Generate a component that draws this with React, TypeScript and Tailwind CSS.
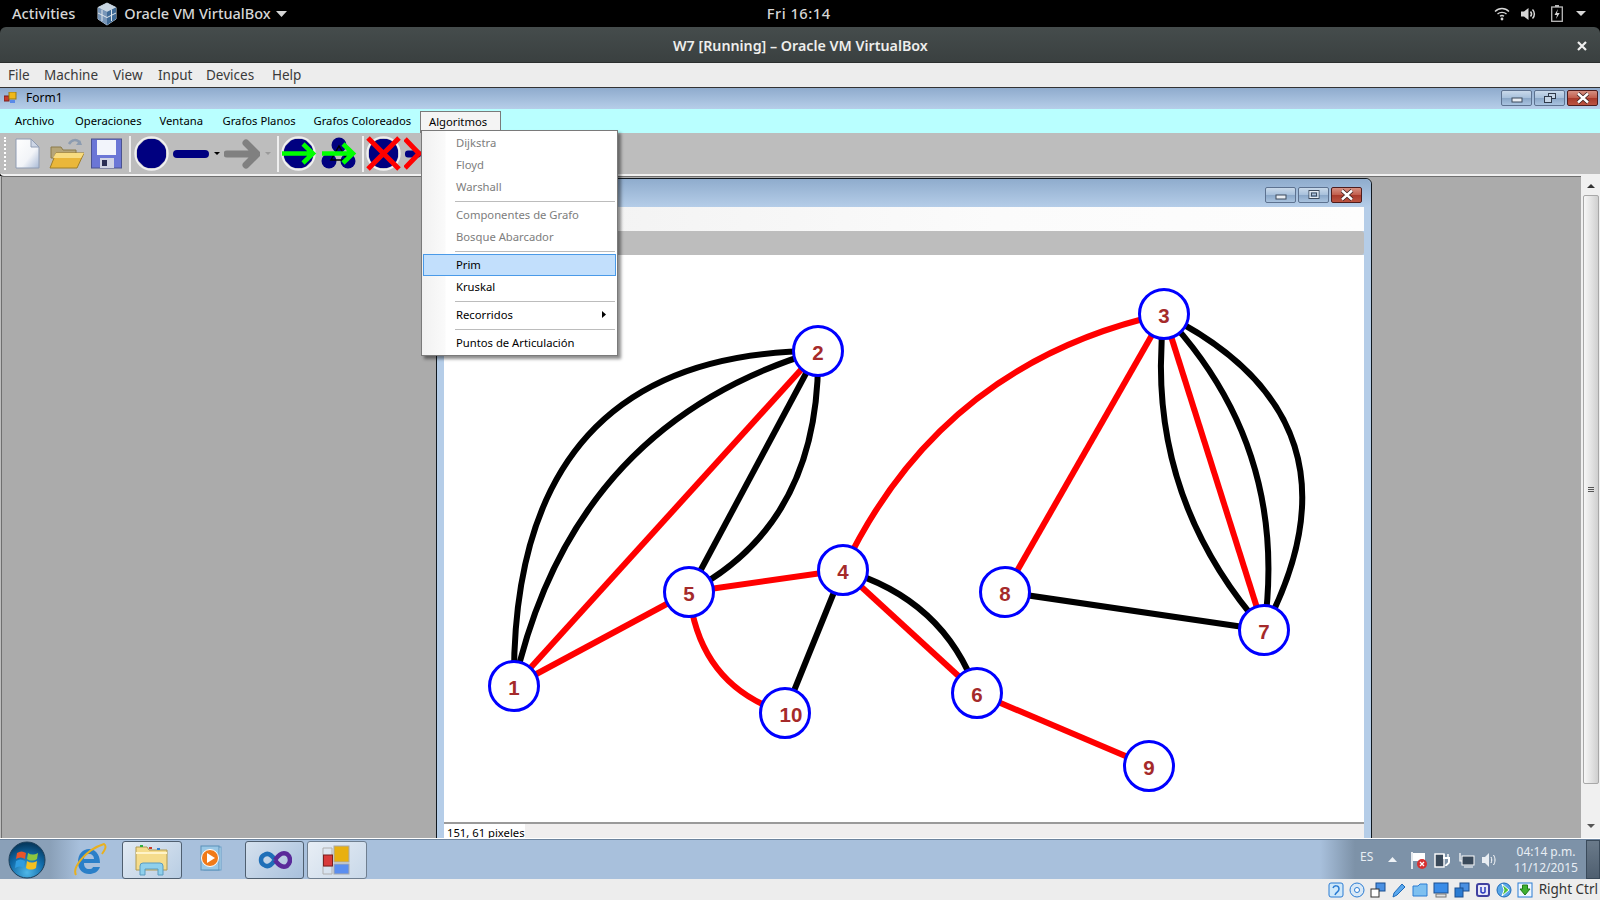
import React from "react";

const ui = { fontFamily: '"Noto Sans", sans-serif' };
const win = { fontFamily: '"Noto Sans", sans-serif', fontSize: "11.25px" };

const nodes: [string, number, number, number][] = [
  ["1", 514, 686, 0], ["2", 818, 351, 0], ["3", 1164, 314, 0], ["4", 843, 570, 0], ["5", 689, 592, 0],
  ["6", 977, 693, 0], ["7", 1264, 630, 0], ["8", 1005, 592, 0], ["9", 1149, 766, 0], ["10", 785, 713, 6],
];
const edges: [string, string][] = [
  ["M514 686Q510 352 818 351", "#000"],
  ["M514 686Q572 424 818 351", "#000"],
  ["M818 351L689 592", "#000"],
  ["M818 351Q821 523 689 592", "#000"],
  ["M843 570L785 713", "#000"],
  ["M843 570Q944 599 977 693", "#000"],
  ["M1005 592L1264 630", "#000"],
  ["M1164 314Q1143 493 1264 630", "#000"],
  ["M1164 314Q1290 447 1264 630", "#000"],
  ["M1164 314Q1375 420 1264 630", "#000"],
  ["M514 686L818 351", "#f00"],
  ["M514 686L689 592", "#f00"],
  ["M689 592L843 570", "#f00"],
  ["M689 592Q699 686 785 713", "#f00"],
  ["M843 570L977 693", "#f00"],
  ["M843 570Q941 363 1164 314", "#f00"],
  ["M1164 314L1005 592", "#f00"],
  ["M1164 314L1264 630", "#f00"],
  ["M977 693L1149 766", "#f00"],
];

function Graph() {
  return (
    <svg width="920" height="567" viewBox="444 255 920 567" className="block">
      {edges.map(([d, c], i) => (
        <path key={i} d={d} fill="none" stroke={c} strokeWidth="6" />
      ))}
      {nodes.map(([l, x, y, dx]) => (
        <g key={l}>
          <circle cx={x} cy={y} r="24.5" fill="#fff" stroke="#0000ff" strokeWidth="3" />
          <text x={x + dx} y={y + 9} textAnchor="middle" fontSize="20.5" fontWeight="700" fill="#a52a2a" fontFamily='"Liberation Sans", sans-serif'>{l}</text>
        </g>
      ))}
    </svg>
  );
}

function WinBtn({ kind }: { kind: "min" | "max" | "restore" | "close" }) {
  const cls = kind === "close"
    ? "border-[#4e1c1c] bg-[linear-gradient(#d69082_0%,#c25f4e_48%,#a93a2b_52%,#bb5442_100%)]"
    : "border-[#5d7290] bg-[linear-gradient(#c9d9ea_0%,#a8c1dc_48%,#8aa7c8_52%,#a9c3df_100%)]";
  return (
    <div className={"flex h-[16px] w-[31px] items-center justify-center rounded-[2px] border " + cls}>
      <svg width="16" height="12" viewBox="0 0 16 12">
        {kind === "min" && <rect x="3" y="6" width="10" height="4" fill="#e8edf3" stroke="#3d4a5c" />}
        {kind === "max" && <><rect x="3" y="1.5" width="10" height="8" fill="none" stroke="#3d4a5c" strokeWidth="1" /><rect x="4" y="2.5" width="8" height="6" fill="none" stroke="#e8edf3" /><rect x="5.5" y="4" width="5" height="3" fill="none" stroke="#3d4a5c" /></>}
        {kind === "restore" && <><rect x="6.5" y="1.5" width="7" height="5" fill="#c5d5e6" stroke="#2f3a4a" /><rect x="2.5" y="4.5" width="7" height="6" fill="#c5d5e6" stroke="#2f3a4a" /></>}
        {kind === "close" && <path d="M3 1.5L13 10.5M13 1.5L3 10.5" stroke="#3a2020" strokeWidth="4" />}
        {kind === "close" && <path d="M3 1.5L13 10.5M13 1.5L3 10.5" stroke="#fff" strokeWidth="2.4" />}
      </svg>
    </div>
  );
}

function VBoxLogo() {
  return (
    <svg width="22" height="24" viewBox="0 0 22 24">
      <path d="M11 1L20 5.5V17L11 23L2 17V5.5Z" fill="#5f7f9f" stroke="#c8d4de" strokeWidth="1" />
      <path d="M11 1L20 5.5L11 10L2 5.5Z" fill="#c9d6e2" />
      <path d="M2 5.5L11 10V23L2 17Z" fill="#7896b8" />
      <path d="M20 5.5L11 10V23L20 17Z" fill="#3f6a96" />
      <path d="M6 7.5V19M15.5 7.5V19M2 11L11 15.5L20 11" stroke="#dfe6ec" strokeWidth="1" fill="none" />
    </svg>
  );
}

function TopBar() {
  return (
    <div className="relative flex h-[27px] items-center bg-black text-[#d6d6d6]" style={ui}>
      <span className="ml-[12px] text-[14.7px] font-medium">Activities</span>
      <span className="ml-[21px]"><VBoxLogo /></span>
      <span className="ml-[6px] text-[14.5px] font-medium">Oracle VM VirtualBox</span>
      <svg className="ml-[5px]" width="11" height="6" viewBox="0 0 11 6"><path d="M0 0H11L5.5 6Z" fill="#d6d6d6" /></svg>
      <span className="ml-[480px] text-[14.7px] font-medium tracking-[0.5px]">Fri 16:14</span>
      <div className="ml-auto mr-[14px] flex items-center">
        <svg width="16" height="15" viewBox="0 0 16 15" fill="none" stroke="#d6d6d6" strokeWidth="1.4">
          <path d="M1 5.5C5 1.5 11 1.5 15 5.5" /><path d="M3.5 8C6 5.8 10 5.8 12.5 8" /><path d="M6 10.3C7 9.5 9 9.5 10 10.3" /><circle cx="8" cy="13" r="1.4" fill="#d6d6d6" stroke="none" />
        </svg>
        <svg className="ml-[11px]" width="16" height="14" viewBox="0 0 16 14" fill="none">
          <path d="M0 4.5H3L7.5 1V13L3 9.5H0Z" fill="#d6d6d6" /><path d="M9.5 4.5C10.8 6 10.8 8 9.5 9.5M11.5 2.5C14 5 14 9 11.5 11.5" stroke="#d6d6d6" strokeWidth="1.5" />
        </svg>
        <svg className="ml-[14px]" width="12" height="17" viewBox="0 0 12 17" fill="none">
          <rect x="0.7" y="2" width="10.6" height="14.3" stroke="#bbb" strokeWidth="1.3" /><rect x="4" y="0" width="4" height="2" fill="#bbb" /><path d="M7 4L3.5 10H6L5 14L8.7 8H6Z" fill="#d6d6d6" />
        </svg>
        <svg className="ml-[13px]" width="10" height="5" viewBox="0 0 10 5"><path d="M0 0H10L5 5Z" fill="#d6d6d6" /></svg>
      </div>
    </div>
  );
}

function TitleBar() {
  return (
    <div className="flex h-[36px] items-center rounded-t-[6px] border-b border-[#2a2e2e] bg-[linear-gradient(#454c4c,#3a4040)] pt-[2px] text-[#eeeeec]" style={ui}>
      <span className="ml-[673px] text-[14.25px] font-semibold">W7 [Running] – Oracle VM VirtualBox</span>
      <svg className="ml-auto mr-[13px]" width="10" height="10" viewBox="0 0 10 10"><path d="M1 1L9 9M9 1L1 9" stroke="#f0f0f0" strokeWidth="2.2" /></svg>
    </div>
  );
}

function VBoxMenu() {
  const items: [string, number][] = [["File", 36], ["Machine", 69], ["View", 45], ["Input", 48], ["Devices", 66], ["Help", 40]];
  return (
    <div className="flex h-[25px] items-center border-b border-[#333] bg-[#ededed] pl-[8px] pt-[1px] text-[13.5px] text-[#3a3a3a]" style={ui}>
      {items.map(([t, w]) => <span key={t} style={{ width: w }}>{t}</span>)}
    </div>
  );
}

function DocIcon() {
  return (
    <svg width="26" height="31" viewBox="0 0 26 31">
      <defs><linearGradient id="dc" x1="0" y1="0" x2="1" y2="1"><stop offset="0" stopColor="#fff" /><stop offset="0.6" stopColor="#f2f4f8" /><stop offset="1" stopColor="#a9bad6" /></linearGradient></defs>
      <path d="M2 1H17L25 9V30H2Z" fill="url(#dc)" stroke="#8f9cb3" />
      <path d="M17 1V9H25Z" fill="#cdd6e6" stroke="#8f9cb3" />
    </svg>
  );
}
function FolderIcon() {
  return (
    <svg width="35" height="31" viewBox="0 0 35 31">
      <path d="M20 6C23 1 28 1 31 5" fill="none" stroke="#8c9cb0" strokeWidth="2.5" />
      <path d="M31 2L33 7L27 7Z" fill="#8c9cb0" />
      <path d="M2 9H12L14 12H27V20H2Z" fill="#b5a578" stroke="#8b7a48" />
      <path d="M7 15H35L28 30H1Z" fill="#eab73a" stroke="#a07f28" />
      <path d="M7 15H35L32 20H4Z" fill="#f8dc80" />
    </svg>
  );
}
function SaveIcon() {
  return (
    <svg width="31" height="31" viewBox="0 0 31 31">
      <rect x="0.5" y="1" width="30" height="29" fill="#6b76d6" stroke="#4a528f" />
      <rect x="6" y="2" width="19" height="15" fill="#f2f4fb" />
      <rect x="9" y="20" width="14" height="10" fill="#d0d3e4" />
      <rect x="11" y="22" width="5" height="6" fill="#2a2d55" />
    </svg>
  );
}
function Octa() {
  return (
    <>
      <circle cx="17.5" cy="17.5" r="16.2" fill="none" stroke="#f0f0f0" strokeWidth="2" />
      <path d="M10 4.5L14 3H21L25 4.5L30.5 10L32 14V21L30.5 25L25 30.5L21 32H14L10 30.5L4.5 25L3 21V14L4.5 10Z" fill="#000080" />
    </>
  );
}
const GreenArrow = ({ x }: { x: number }) => (
  <path d={`M${x} 17.5H${x + 31}M${x + 21} 8L${x + 31} 17.5L${x + 21} 27`} fill="none" stroke="#00ff00" strokeWidth="4.5" />
);

function Toolbar() {
  return (
    <div className="relative flex h-[43px] items-center overflow-hidden rounded-bl-[4px] border-b-2 border-[#f0f0f0] bg-[#bdbdbd] pl-[14px]">
      <div className="absolute left-[4px] top-[4px] h-[33px] w-[2px] border-l-2 border-dotted border-white" />
      <DocIcon />
      <span className="ml-[9px]"><FolderIcon /></span>
      <span className="ml-[7px]"><SaveIcon /></span>
      <div className="ml-[7px] h-[36px] w-[2px] bg-[#efefef]" />
      <svg className="ml-[3px]" width="35" height="35" viewBox="0 0 35 35"><Octa /></svg>
      <svg className="ml-[4px]" width="36" height="8" viewBox="0 0 36 8"><rect x="0" y="0" width="36" height="8" rx="4" fill="#000080" /></svg>
      <svg className="ml-[5px]" width="6" height="3" viewBox="0 0 6 3"><path d="M0 0H6L3 3Z" fill="#000" /></svg>
      <svg className="ml-[4px]" width="36" height="30" viewBox="0 0 36 30"><path d="M3 15H32M22 4L33 15L22 26" fill="none" stroke="#808080" strokeWidth="7" strokeLinecap="round" /></svg>
      <svg className="ml-[5px]" width="6" height="3" viewBox="0 0 6 3"><path d="M0 0H6L3 3Z" fill="#9a9a9a" /></svg>
      <div className="ml-[6px] h-[36px] w-[2px] bg-[#efefef]" />
      <svg className="ml-[2px]" width="36" height="35" viewBox="0 0 36 35"><Octa /><GreenArrow x={1} /></svg>
      <svg className="ml-[4px]" width="36" height="35" viewBox="0 0 36 35">
        <circle cx="18" cy="9" r="7.5" fill="#000080" /><circle cx="8" cy="25" r="7.5" fill="#000080" /><circle cx="27" cy="25" r="7.5" fill="#000080" />
        <path d="M10 24H26L18 10Z" fill="none" stroke="#000" strokeWidth="1.5" />
        <GreenArrow x={1} />
      </svg>
      <div className="ml-[5px] h-[36px] w-[2px] bg-[#efefef]" />
      <svg className="ml-[2px]" width="36" height="35" viewBox="0 0 36 35">
        <Octa />
        <path d="M2 2L33 33M33 2L2 33" stroke="#ff0000" strokeWidth="5" />
      </svg>
      <svg className="ml-[2px]" width="20" height="35" viewBox="0 0 20 35">
        <rect x="1" y="14.5" width="16" height="7" rx="3" fill="#000080" />
        <path d="M1 3L15 17.5L1 32" fill="none" stroke="#ff0000" strokeWidth="5" />
      </svg>
    </div>
  );
}

function FormMenu() {
  const items: [string, number][] = [["Archivo", 60], ["Operaciones", 84.5], ["Ventana", 63], ["Grafos Planos", 91], ["Grafos Coloreados", 106.5]];
  return (
    <div className="flex h-[24px] items-end bg-[#b9ffff] pl-[15px] text-black" style={win}>
      {items.map(([t, w]) => <span key={t} className="pb-[3px]" style={{ width: w }}>{t}</span>)}
      <span className="flex h-[22px] w-[81px] items-center justify-start border border-b-0 border-[#7a7a7a] bg-[#f4f4f4] pb-[1px] pl-[8px]">Algoritmos</span>
    </div>
  );
}

function Dropdown() {
  const Row = ({ t, off, hi, arrow }: { t: string; off?: boolean; hi?: boolean; arrow?: boolean }) => (
    <div className={"relative flex h-[22px] items-center " + (off ? "text-[#7d7d7d] " : "text-black ") + (hi ? "border border-[#4a9ae8] bg-[#c2dffc] pl-[32px]" : "pl-[33px]")}>
      {t}
      {arrow && <svg className="absolute right-[10px] top-[7px]" width="4" height="7" viewBox="0 0 4 7"><path d="M0 0L4 3.5L0 7Z" fill="#000" /></svg>}
    </div>
  );
  const Sep = () => <div className="flex h-[6px] items-center pl-[32px] pr-[1px]"><div className="h-px w-full bg-[#bcbcbc]" /></div>;
  return (
    <div className="absolute left-[421px] top-[130px] z-10 h-[226px] w-[197px] border border-[#7a7a7a] bg-[linear-gradient(90deg,#f1f1f1_0,#fafafa_23px,#fff_24px)] p-[1px] pt-[1px] shadow-[3px_3px_3px_rgba(0,0,0,0.45)]" style={win}>
      <Row t="Dijkstra" off /><Row t="Floyd" off /><Row t="Warshall" off /><Sep />
      <Row t="Componentes de Grafo" off /><Row t="Bosque Abarcador" off /><Sep />
      <Row t="Prim" hi /><Row t="Kruskal" /><Sep />
      <Row t="Recorridos" arrow /><Sep />
      <Row t="Puntos de Articulación" />
    </div>
  );
}

function ChildWindow() {
  return (
    <div className="h-[680px] w-[936px] shrink-0 rounded-t-[6px] border border-[#10181f] bg-[#b5cde8] px-[7px]">
      <div className="-mx-[7px] flex h-[28px] items-start justify-end gap-[2px] rounded-t-[6px] bg-[linear-gradient(#8faccd,#b5cde8)] pl-[7px] pr-[9px] pt-[8px]">
        <WinBtn kind="min" /><WinBtn kind="max" /><WinBtn kind="close" />
      </div>
      <div className="h-[24px] bg-[linear-gradient(90deg,#f0f0f0,#fbfbfb_60%,#fdfdfd)]" />
      <div className="h-[24px] rounded-r-[3px] bg-[#bdbdbd]" />
      <div className="h-[567px] bg-white"><Graph /></div>
      <div className="flex h-[22px] border-t-2 border-[#9a9a9a] bg-[#f0eeee] text-[#000]" style={{ fontFamily: '"Noto Sans", sans-serif', fontSize: "11.25px" }}>
        <span className="w-[81px] whitespace-nowrap bg-white pl-[3px] pt-[1px]">151, 61 pixeles</span>
      </div>
    </div>
  );
}

function Scrollbar() {
  return (
    <div className="flex w-[19px] shrink-0 flex-col items-center bg-[#f0f0f0]">
      <div className="flex h-[19px] items-center justify-center"><svg width="8" height="4" viewBox="0 0 8 4"><path d="M4 0L8 4H0Z" fill="#333" /></svg></div>
      <div className="flex h-[589px] w-[16px] items-center justify-center rounded-[2px] border border-[#a8a8a8] bg-[linear-gradient(90deg,#f7f7f7,#e4e4e4_50%,#cfcfcf)]">
        <div className="flex flex-col gap-[1px]"><div className="h-px w-[6px] bg-[#555]" /><div className="h-px w-[6px] bg-[#555]" /><div className="h-px w-[6px] bg-[#555]" /></div>
      </div>
      <div className="mt-auto flex h-[20px] items-center justify-center pb-[4px]"><svg width="8" height="4" viewBox="0 0 8 4"><path d="M0 0H8L4 4Z" fill="#555" /></svg></div>
    </div>
  );
}

function FormWindow() {
  return (
    <div className="flex min-h-0 flex-1 flex-col border-b border-white">
      <div className="flex h-[21px] items-center bg-[linear-gradient(#8fabcd,#b6cee9)] pb-[1px]" style={win}>
        <svg className="ml-[4px]" width="13" height="12" viewBox="0 0 13 12"><rect x="0" y="4" width="5" height="5" fill="#c83a2a" stroke="#7a1f1f" /><rect x="5" y="0" width="7" height="7" fill="#f0b818" stroke="#9a7a10" /><rect x="6" y="8" width="5" height="3" fill="#5a8ae8" /></svg>
        <span className="ml-[9px] text-[12px] text-black">Form1</span>
        <div className="ml-auto mr-[2px] flex gap-[2px]"><WinBtn kind="min" /><WinBtn kind="restore" /><WinBtn kind="close" /></div>
      </div>
      <FormMenu />
      <Toolbar />
      <div className="flex min-h-0 flex-1 bg-[#bdbdbd] pl-px">
        <div className="flex min-w-0 flex-1 overflow-hidden border-l border-t border-[#6f6f6f] bg-[#ababab] pl-[434px] pt-[1px]">
          <ChildWindow />
        </div>
        <Scrollbar />
      </div>
    </div>
  );
}

function Taskbar() {
  return (
    <div className="relative flex h-[40px] items-center border-t border-[#6d849e] bg-[linear-gradient(90deg,#8aa0b8_0,#8aa0b8_50px,#a8c0dc_80px,#a8c0dc_1320px,#7d92a8_1355px,#7d92a8_1585px)]" style={{ fontFamily: '"Noto Sans", sans-serif' }}>
      <svg className="ml-[8px]" width="38" height="38" viewBox="0 0 38 38">
        <defs>
          <radialGradient id="orb" cx="0.5" cy="0.85" r="0.8"><stop offset="0" stopColor="#4fb7e8" /><stop offset="0.6" stopColor="#106aa8" /><stop offset="1" stopColor="#063a60" /></radialGradient>
        </defs>
        <circle cx="19" cy="19" r="18" fill="url(#orb)" stroke="#1e3f5a" />
        <path d="M9 12C12 10 15 10 18 12L17 18C14 16 11 16 8 18Z" fill="#e8552a" />
        <path d="M20 12C23 14 26 14 30 12L29 18C26 20 22 20 19 18Z" fill="#8cc63f" />
        <path d="M8 20C11 18 14 18 17 20L16 27C13 25 10 25 7 27Z" fill="#2f9ce0" />
        <path d="M19 20C22 22 25 22 29 20L28 27C25 29 21 29 18 27Z" fill="#f4c020" />
      </svg>
      <svg className="ml-[27px]" width="34" height="36" viewBox="0 0 34 36" fill="none">
        <path d="M6 21H27C27 11 21 7 16 7C10 7 5 12 5 20C5 28 10 32 16 32C21 32 25 30 27 25H20C19 27 18 27 16 27C13 27 11 25 11 21M11 17H21C21 14 19 12 16 12C13 12 11 14 11 17Z" fill="#2a7fc8" fillRule="evenodd" />
        <path d="M3 33C-1 26 12 8 31 2C34 4 32 8 29 12" stroke="#e8b020" strokeWidth="2" />
      </svg>
      <div className="ml-[15px] flex h-[38px] w-[60px] items-center justify-center rounded-[3px] border border-[#4f5f70] bg-[linear-gradient(135deg,#e2eaf3,#b8cde3)]">
        <svg width="34" height="32" viewBox="0 0 34 32">
          <path d="M1 3H12L14 6H32V26H1Z" fill="#f5dc8c" stroke="#b09a50" />
          <rect x="5" y="1" width="3" height="2" fill="#2fae3f" /><rect x="14" y="3" width="3" height="2" fill="#c83a2a" /><rect x="22" y="4" width="3" height="2" fill="#2f7fd0" />
          <path d="M1 9H32" stroke="#fff3c8" strokeWidth="2" />
          <path d="M5 31V22Q5 19 8 19H25Q28 19 28 22V31H23V25H10V31Z" fill="#8fd0ec" stroke="#5a9cc0" />
        </svg>
      </div>
      <svg className="ml-[16px]" width="30" height="30" viewBox="0 0 30 30">
        <rect x="6" y="2" width="17" height="23" fill="#c0ddf0" stroke="#6aa0c8" /><rect x="3" y="1" width="18" height="24" fill="#9ac8e6" stroke="#5a90b8" />
        <circle cx="12" cy="13" r="8.5" fill="#f07a18" stroke="#fff" strokeWidth="1" /><path d="M9 8L17 13L9 18Z" fill="#fff" />
      </svg>
      <div className="ml-[17px] flex h-[38px] w-[59px] items-center justify-center rounded-[3px] border border-[#4f5f70] bg-[linear-gradient(135deg,#d5e1ee,#a8c0dc)]">
        <svg width="34" height="20" viewBox="0 0 34 20" fill="none">
          <path d="M17 10C13 4 9 3 6 5C2 7 2 13 6 15C9 17 13 16 17 10" stroke="#1f6fb8" strokeWidth="4.5" />
          <path d="M17 10C21 4 25 2 29 4C33 7 33 13 29 16C25 18 21 16 17 10" stroke="#5a2a9a" strokeWidth="4.5" />
        </svg>
      </div>
      <div className="ml-[3px] flex h-[38px] w-[60px] items-center justify-center rounded-[3px] border border-[#6f7f90] bg-[linear-gradient(135deg,#e8eef5,#c8d8e9)]">
        <svg width="30" height="30" viewBox="0 0 30 30">
          <path d="M1 3H10V29H1Z" fill="none" stroke="#b0b0b0" /><path d="M1 21H10" stroke="#b0b0b0" />
          <rect x="1.5" y="10" width="9" height="11" fill="#d83a3a" stroke="#7a1f1f" />
          <rect x="12" y="1" width="15" height="16" fill="#e8b010" stroke="#a8a8a8" />
          <rect x="12" y="19" width="15" height="10" fill="#5a8ef0" stroke="#a8a8a8" />
        </svg>
      </div>
      <span className="absolute left-[1360px] top-[8px] text-[12px] text-[#e8eef4]">ES</span>
      <svg className="absolute left-[1388px] top-[17px]" width="9" height="5" viewBox="0 0 9 5"><path d="M4.5 0L9 5H0Z" fill="#eef2f6" /></svg>
      <svg className="absolute left-[1410px] top-[11px]" width="18" height="20" viewBox="0 0 18 20">
        <path d="M2 1V18" stroke="#fff" strokeWidth="1.6" /><path d="M3 2H15V10H3Z" fill="#fff" />
        <circle cx="12" cy="13" r="5" fill="#d83030" /><path d="M10 11L14 15M14 11L10 15" stroke="#fff" strokeWidth="1.3" />
      </svg>
      <svg className="absolute left-[1434px] top-[12px]" width="17" height="17" viewBox="0 0 17 17" fill="none">
        <rect x="1" y="2" width="9" height="13" fill="#39495a" stroke="#fff" strokeWidth="1.4" /><path d="M9 6H15V10C15 12 12 12 12 14" stroke="#fff" strokeWidth="2" /><path d="M10 2V6M14 2V6" stroke="#fff" strokeWidth="1.4" />
      </svg>
      <svg className="absolute left-[1458px] top-[12px]" width="17" height="17" viewBox="0 0 17 17" fill="none">
        <rect x="4" y="4" width="12" height="9" fill="#39495a" stroke="#fff" /><path d="M2 1V9H4M6 15H15" stroke="#fff" strokeWidth="1.2" />
      </svg>
      <svg className="absolute left-[1482px] top-[12px]" width="16" height="16" viewBox="0 0 16 16" fill="none">
        <path d="M0 5H3L7 1V15L3 11H0Z" fill="#e8edf2" /><path d="M9 5C10 7 10 9 9 11M11.5 3C13.5 6 13.5 10 11.5 13" stroke="#fff" />
      </svg>
      <div className="absolute left-[1512px] top-[4px] w-[68px] text-center text-[12px] leading-[16px] text-[#e8eef4]">
        <div>04:14 p.m.</div><div>11/12/2015</div>
      </div>
      <div className="absolute left-[1586px] top-0 h-[39px] w-[14px] border border-[#3a4a5a] bg-[linear-gradient(#6a7a8a,#4f5f70)]" />
    </div>
  );
}

function Status() {
  const c = "#2b7cd3";
  const icons: React.ReactNode[] = [
    <><rect x="1" y="1" width="14" height="14" rx="2" fill="#cfe8fa" stroke={c} /><path d="M5 6C6 3 11 3 11 7C11 10 8 10 7 13" stroke={c} fill="none" strokeWidth="1.5" /></>,
    <><circle cx="8" cy="8" r="7" fill="#d8e8f6" stroke={c} /><circle cx="8" cy="8" r="2.5" fill="#fff" stroke={c} /></>,
    <><rect x="6" y="1" width="9" height="8" fill="#4a90e2" stroke="#1a4f90" /><rect x="1" y="7" width="8" height="8" fill="#fff" stroke="#333" /></>,
    <><path d="M2 15L3 11L11 2L14 5L6 13Z" fill="#5aa8ee" stroke="#1e6ab8" /></>,
    <><path d="M1 4H6L8 2H15V14H1Z" fill="#7ec0f0" stroke={c} /></>,
    <><rect x="1" y="1" width="14" height="10" fill="#3a8ce8" stroke="#1a4f90" /><rect x="3" y="12" width="10" height="3" fill="#e0e0e0" stroke="#777" /></>,
    <><rect x="6" y="1" width="9" height="8" fill="#4a90e2" stroke="#1a4f90" /><rect x="1" y="6" width="8" height="9" fill="#2b7cd3" stroke="#1a4f90" /></>,
    <><rect x="2" y="2" width="12" height="12" rx="2" fill="#e8e8f8" stroke="#4040a0" strokeWidth="2" /><path d="M6 5V10Q8 12 10 10V5" stroke="#2b3cc0" fill="none" strokeWidth="1.5" /></>,
    <><circle cx="8" cy="8" r="7" fill="#5aa8e8" stroke="#1e6ab8" /><path d="M6 2L13 8L6 14L8 8Z" fill="#4ec03a" stroke="#fff" /></>,
    <><rect x="1" y="1" width="14" height="14" fill="#eef6ff" stroke={c} /><path d="M5.5 3H10.5V7H13L8 13L3 7H5.5Z" fill="#3fb030" stroke="#1f7a18" /></>,
  ];
  return (
    <div className="flex h-[21px] items-center justify-end bg-[#ededed] pr-[2px] text-[13.5px] text-[#333]" style={ui}>
      <div className="mr-[6px] flex gap-[5px]">
        {icons.map((ic, i) => <svg key={i} width="16" height="16" viewBox="0 0 16 16">{ic}</svg>)}
      </div>
      <span>Right Ctrl</span>
    </div>
  );
}

export default function App() {
  return (
    <div className="relative flex h-[900px] w-[1600px] flex-col overflow-hidden bg-black">
      <TopBar />
      <TitleBar />
      <VBoxMenu />
      <FormWindow />
      <Taskbar />
      <Status />
      <Dropdown />
    </div>
  );
}
